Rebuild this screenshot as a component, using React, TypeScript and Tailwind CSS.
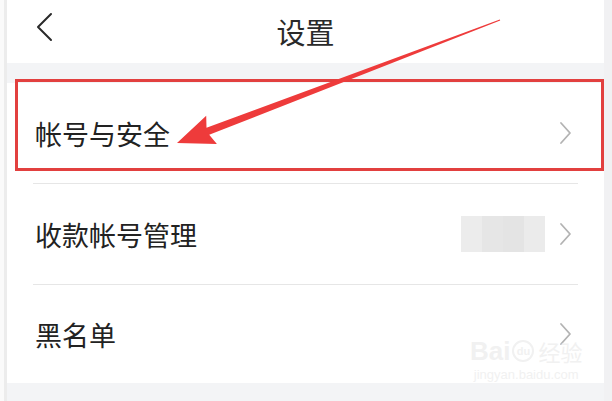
import React from "react";

const Chevron = () => (
  <svg width="14" height="24" viewBox="0 0 14 24" fill="none">
    <path d="M2 2 L11 12 L2 22" stroke="#b3b3b3" strokeWidth="1.8" strokeLinecap="round" strokeLinejoin="round" />
  </svg>
);

function Row({ label, extra, last }: { label: string; extra?: React.ReactNode; last?: boolean }) {
  return (
    <div className="flex flex-col">
      <div className={`flex items-center pl-[28px] pr-[31px] ${last ? "h-[98px]" : "h-[100px]"}`}>
        <span className="text-[27px] leading-none text-[#222]">{label}</span>
        <div className="flex-1" />
        {extra}
        <Chevron />
      </div>
      {!last && <div className="mx-[26px] h-px bg-[#e6e6e6]" />}
    </div>
  );
}

export default function App() {
  const tail = [500, 20];
  const tip = [177, 143];
  const dx = tail[0] - tip[0];
  const dy = tail[1] - tip[1];
  const len = Math.hypot(dx, dy);
  const u = [dx / len, dy / len];
  const n = [-u[1], u[0]];
  const hl = 33;
  const hw = 15;
  const sw = 3.8;
  const base = [tip[0] + hl * u[0], tip[1] + hl * u[1]];
  const pts = [
    tip,
    [base[0] + hw * n[0] + 4 * u[0], base[1] + hw * n[1] + 4 * u[1]],
    [base[0] + sw * n[0], base[1] + sw * n[1]],
    [tail[0] + 0.5 * n[0], tail[1] + 0.5 * n[1]],
    [tail[0] - 0.5 * n[0], tail[1] - 0.5 * n[1]],
    [base[0] - sw * n[0], base[1] - sw * n[1]],
    [base[0] - hw * n[0] + 4 * u[0], base[1] - hw * n[1] + 4 * u[1]],
  ]
    .map((p) => `${p[0].toFixed(1)},${p[1].toFixed(1)}`)
    .join(" ");

  return (
    <div
      className="relative w-[612px] h-[401px] overflow-hidden bg-white flex"
      style={{ fontFamily: '"Noto Sans CJK SC", "Noto Sans", sans-serif' }}
    >
      <div className="w-[4px] bg-[#fafafa]" />
      <div className="w-[3px] bg-[#ececec]" />
      <div className="flex-1 flex flex-col">
        <div className="relative h-[63px] flex items-center justify-center bg-white">
          <svg className="absolute left-[27px] top-[12px]" width="20" height="30" viewBox="0 0 20 30" fill="none">
            <path d="M17 2 L4 15 L17 28" stroke="#2a2a2a" strokeWidth="2" strokeLinecap="round" strokeLinejoin="round" />
          </svg>
          <span className="text-[29px] leading-none text-[#2a2a2a]">设置</span>
        </div>
        <div className="h-[20px] bg-[#f3f4f6]" />
        <div className="flex flex-col bg-white">
          <Row label="帐号与安全" />
          <Row
            label="收款帐号管理"
            extra={
              <div className="mr-[14px] grid grid-cols-4 w-[84px] h-[36px] opacity-90">
                <div className="bg-[#ebebeb]" />
                <div className="bg-[#e4e4e4]" />
                <div className="bg-[#e2e2e2]" />
                <div className="bg-[#e9e9e9]" />
              </div>
            }
          />
          <Row label="黑名单" last />
        </div>
        <div className="flex-1 bg-[#f3f4f6]" />
      </div>
      <div className="w-[8px] bg-[#f1f1f3]" />

      {/* watermark */}
      <div className="absolute left-[470px] top-[338px] flex flex-col items-center text-[#f1f1f1] leading-none">
        <div className="flex items-center gap-[2px]">
          <span className="text-[26px] font-bold" style={{ fontFamily: '"Liberation Sans", sans-serif' }}>Bai</span>
          <span className="w-[22px] h-[22px] rounded-full border-2 border-[#f1f1f1] text-[11px] font-bold flex items-center justify-center" style={{ fontFamily: '"Liberation Sans", sans-serif' }}>du</span>
          <span className="text-[22px] ml-[2px]">经验</span>
        </div>
        <span className="text-[13px] mt-[4px]" style={{ fontFamily: '"Liberation Sans", sans-serif' }}>jingyan.baidu.com</span>
      </div>

      {/* annotation */}
      <div className="absolute left-[15px] top-[79px] w-[589px] h-[92px] border-[3px] border-[#e2403f]" />
      <svg className="absolute left-0 top-0" width="612" height="401" viewBox="0 0 612 401">
        <polygon points={pts} fill="#ee3b3b" />
      </svg>
    </div>
  );
}
